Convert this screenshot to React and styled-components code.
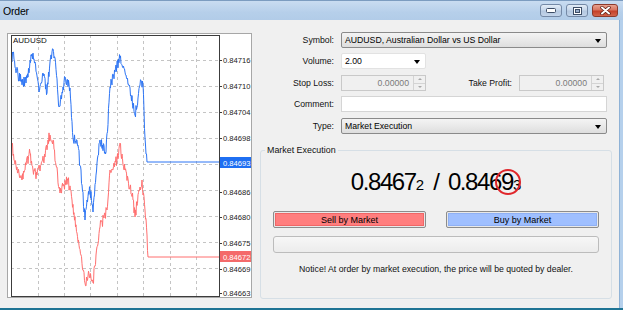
import React from 'react'
import styled, { createGlobalStyle } from 'styled-components'

const GlobalStyle = createGlobalStyle`
  html, body {
    margin: 0;
    padding: 0;
    background: #fff;
  }
  body {
    font-family: "Liberation Sans", Arial, sans-serif;
    color: #000;
  }
`

const Window = styled.div`
  width: 623px;
  height: 310px;
  display: flex;
  flex-direction: column;
  box-sizing: border-box;
  background: #b5d0ec;
  border-top: 1px solid #7c9cc0;
  border-bottom: 2px solid #1f7494;
  overflow: hidden;
`

const TitleBar = styled.div`
  height: 19px;
  display: flex;
  align-items: center;
  justify-content: space-between;
  padding-left: 3px;
  background: linear-gradient(#c9dcf1, #b6cfea 60%, #b2cce8);
`

const Title = styled.span`
  font-size: 10.5px;
  letter-spacing: -0.2px;
  margin-top: 1px;
`

const Controls = styled.div`
  display: flex;
  gap: 4px;
  margin-right: 5px;
  align-self: flex-start;
  margin-top: 3px;
`

const CtrlButton = styled.div`
  width: ${p => (p.$close ? 26 : 22)}px;
  height: 13px;
  box-sizing: border-box;
  border: 1px solid ${p => (p.$close ? '#8d3a2c' : '#7489a6')};
  border-radius: 3px;
  background: ${p =>
    p.$close
      ? 'linear-gradient(#e8a290, #d87561 45%, #c5402a 55%, #d2654c)'
      : 'linear-gradient(#e3ecf6, #c6d6ea 45%, #b4c8e0 55%, #c3d4ea)'};
  display: flex;
  align-items: center;
  justify-content: center;
`

const Body = styled.div`
  flex: 1;
  display: flex;
  background: #f0f0f0;
  margin-right: 3px;
  border-right: 1px solid #8fb2d6;
`

const ChartPanel = styled.div`
  width: 243px;
  height: 263px;
  margin: 13px 0 0 7px;
  background: #fff;
  border: 1px solid #a7a7a7;
  flex-shrink: 0;

  svg {
    display: block;
  }
`

const Form = styled.div`
  flex: 1;
  margin-left: 3px;
  padding-top: 12px;
  display: flex;
  flex-direction: column;
  font-size: 8.7px;
`

const Row = styled.div`
  display: flex;
  align-items: center;
  height: 16px;
  margin-top: ${p => p.$top || 0}px;
`

const Label = styled.span`
  width: ${p => p.$w || 86}px;
  box-sizing: border-box;
  padding-right: 7px;
  text-align: right;
  color: #111;
`

const Combo = styled.div`
  position: relative;
  width: ${p => p.$w}px;
  height: ${p => p.$h || 16}px;
  box-sizing: border-box;
  display: flex;
  align-items: center;
  padding-left: 3px;
  border: 1px solid ${p => (p.$plain ? '#e2e2e2' : '#8a8a8a')};
  border-radius: 2px;
  background: ${p => (p.$plain ? '#fff' : 'linear-gradient(#f4f4f4, #e9e9e9 50%, #dedede)')};
`

const Arrow = styled.span`
  position: absolute;
  right: 5px;
  top: 50%;
  margin-top: -1px;
  border-left: 3.5px solid transparent;
  border-right: 3.5px solid transparent;
  border-top: 4px solid #000;
`

const Spin = styled.div`
  position: relative;
  width: ${p => p.$w}px;
  height: 16px;
  box-sizing: border-box;
  border: 1px solid #c9c9c9;
  background: #f0f0f0;
  display: flex;
  align-items: stretch;
`

const SpinValue = styled.span`
  flex: 1;
  text-align: right;
  padding-right: 4px;
  color: #7a7a7a;
  line-height: 14px;
`

const SpinButtons = styled.div`
  width: 11px;
  display: flex;
  flex-direction: column;
  border-left: 1px solid #d4d4d4;
`

const SpinHalf = styled.div`
  flex: 1;
  display: flex;
  align-items: center;
  justify-content: center;
  border-top: ${p => (p.$down ? '1px solid #d4d4d4' : 'none')};

  &::after {
    content: '';
    border-left: 2px solid transparent;
    border-right: 2px solid transparent;
    ${p => (p.$down ? 'border-top: 2px solid #a8a8a8;' : 'border-bottom: 2px solid #a8a8a8;')}
  }
`

const TextBox = styled.div`
  width: ${p => p.$w}px;
  height: 16px;
  box-sizing: border-box;
  border: 1px solid #d5d5d5;
  background: #fff;
`

const Group = styled.fieldset`
  margin: 11px 7px 0 5px;
  height: 154px;
  box-sizing: border-box;
  padding: 0 12px;
  border: 1px solid #d6dfe6;
  border-radius: 3px;
  display: flex;
  flex-direction: column;
  min-width: 0;
`

const Legend = styled.legend`
  font-size: 8.9px;
  line-height: 10px;
  padding: 0 2px;
  margin-left: -8px;
  color: #111;
`

const Price = styled.div`
  margin-top: 13px;
  text-align: center;
  font-size: 24px;
  line-height: 28px;
  letter-spacing: -1.4px;
  word-spacing: 4px;
  color: #000;
  white-space: nowrap;
`

const Small = styled.span`
  font-size: 15px;
  letter-spacing: 0;
`

const Marked = styled.span`
  position: relative;

  &::after {
    content: '';
    position: absolute;
    left: 50%;
    top: 50%;
    width: 22px;
    height: 22px;
    margin: -13px 0 0 -12px;
    border: 2px solid #e0262b;
    border-radius: 50%;
  }
`

const Buttons = styled.div`
  margin-top: 12px;
  display: grid;
  grid-template-columns: 1fr 1fr;
  gap: 20px;
`

const TradeButton = styled.div`
  height: 17px;
  box-sizing: border-box;
  border: 1px solid #8c8c8c;
  border-radius: 2px;
  padding: 1px;
  background: #e8e8e8;

  span {
    display: flex;
    height: 100%;
    align-items: center;
    justify-content: center;
    font-size: 9px;
    background: ${p => (p.$sell ? '#ff7e7e' : '#9fbfff')};
    box-shadow: inset 0 0 0 1px ${p => (p.$sell ? '#f06666' : '#8fb0f4')};
  }
`

const Progress = styled.div`
  margin-top: 8px;
  height: 17px;
  box-sizing: border-box;
  border: 1px solid #bcbcbc;
  border-radius: 3px;
  background: linear-gradient(#f7f7f7, #ececec);
`

const Notice = styled.div`
  margin-top: 11px;
  text-align: center;
  font-size: 8.7px;
  line-height: 11px;
  color: #111;
`

const blueKeys = [
  [12, 62], [13, 53], [15, 67], [18, 75], [23, 83], [27, 78], [32, 54], [35, 62],
  [39, 92], [43, 73], [47, 93], [50, 62], [53, 49], [55, 58], [59, 107], [65, 77],
  [70, 88], [73, 138], [78, 145], [82, 185], [85, 220], [87, 200], [90, 189], [93, 212],
  [97, 163], [100, 140], [106, 152], [110, 87], [115, 72], [120, 58], [126, 75], [130, 88],
  [135, 115], [140, 85], [143, 85], [145, 138], [147, 162], [219, 162],
]

const redKeys = [
  [12, 145], [14, 160], [17, 167], [20, 178], [22, 180], [26, 165], [30, 153], [33, 170],
  [37, 175], [41, 165], [45, 157], [48, 140], [50, 135], [53, 140], [56, 165], [60, 193],
  [64, 185], [68, 180], [72, 200], [77, 233], [81, 255], [85, 283], [88, 276], [90, 277],
  [93, 283], [96, 255], [100, 227], [104, 218], [107, 210], [110, 170], [114, 163], [117, 160],
  [120, 143], [123, 165], [125, 170], [130, 187], [133, 200], [135, 217], [139, 190], [142, 180],
  [145, 210], [147, 235], [148, 257], [219, 257],
]

// jagged tick line through the key points, flat tail at the end
function tickPath(keys, seed, amp) {
  let s = seed
  const rnd = () => {
    s = (s * 16807) % 2147483647
    return s / 2147483647
  }
  let d = `M${keys[0][0]},${keys[0][1]}`
  for (let i = 0; i < keys.length - 2; i++) {
    const [x0, y0] = keys[i]
    const [x1, y1] = keys[i + 1]
    const steps = Math.max(1, Math.round((x1 - x0) / 0.5))
    for (let k = 1; k <= steps; k++) {
      const t = k / steps
      const x = x0 + (x1 - x0) * t
      const y = y0 + (y1 - y0) * t + (k < steps ? (rnd() - 0.5) * amp : 0)
      d += `L${x.toFixed(1)},${y.toFixed(1)}`
    }
  }
  const [xf, yf] = keys[keys.length - 1]
  return d + `L${xf},${yf}`
}

const gridY = [60, 86, 112, 138, 164, 190, 216, 242, 268]
const gridX = [38, 64, 90, 117, 143, 170, 196]
const scale = [
  ['0.84716', 60], ['0.84710', 86], ['0.84704', 112], ['0.84698', 138],
  ['0.84686', 192], ['0.84680', 217], ['0.84675', 243], ['0.84669', 269], ['0.84663', 293],
]

function Chart() {
  return (
    <svg width="243" height="263" viewBox="8 34 243 263" fontFamily="Liberation Sans, Arial, sans-serif">
      {gridY.map(y => (
        <line key={y} x1="11" x2="219" y1={y + 0.5} y2={y + 0.5} stroke="#c4c4c4" strokeDasharray="3 3" />
      ))}
      {gridX.map(x => (
        <line key={x} x1={x + 0.5} x2={x + 0.5} y1="35" y2="297" stroke="#c4c4c4" strokeDasharray="3 3" />
      ))}
      <path d={tickPath(redKeys, 97, 11)} fill="none" stroke="#ff6f6f" strokeWidth="1" />
      <path d={tickPath(blueKeys, 31, 11)} fill="none" stroke="#2c74f4" strokeWidth="1" />
      <rect x="11.5" y="35.5" width="208" height="261" fill="none" stroke="#3c3c3c" />
      <text x="13" y="43" fontSize="8" fill="#111">AUDUSD</text>
      {scale.map(([v, y]) => (
        <g key={v}>
          <line x1="219" x2="222" y1={y + 0.5} y2={y + 0.5} stroke="#3c3c3c" />
          <text x="223" y={y + 3} fontSize="7.6" fill="#222">{v}</text>
        </g>
      ))}
      <rect x="220" y="157" width="31" height="11" fill="#1f6ff2" />
      <text x="223" y="165.5" fontSize="7.6" fill="#fff">0.84693</text>
      <rect x="220" y="251" width="31" height="11" fill="#f46a6a" />
      <text x="223" y="259.5" fontSize="7.6" fill="#fff">0.84672</text>
    </svg>
  )
}

export default function App() {
  return (
    <>
      <GlobalStyle />
      <Window>
        <TitleBar>
          <Title>Order</Title>
          <Controls>
            <CtrlButton>
              <svg width="10" height="5" viewBox="0 0 10 5">
                <rect x="0.5" y="0.5" width="9" height="4" rx="1" fill="#fff" stroke="#3d4d66" />
              </svg>
            </CtrlButton>
            <CtrlButton>
              <svg width="9" height="8" viewBox="0 0 9 8">
                <rect x="0.5" y="0.5" width="8" height="7" fill="#fff" stroke="#3d4d66" />
                <rect x="2.5" y="2.5" width="4" height="3" fill="#9aaecb" stroke="#3d4d66" />
              </svg>
            </CtrlButton>
            <CtrlButton $close>
              <svg width="11" height="9" viewBox="0 0 11 9">
                <path d="M2 1.5 L9 7.5 M9 1.5 L2 7.5" stroke="#5a1a10" strokeWidth="3.4" strokeLinecap="round" />
                <path d="M2 1.5 L9 7.5 M9 1.5 L2 7.5" stroke="#fff" strokeWidth="2" strokeLinecap="round" />
              </svg>
            </CtrlButton>
          </Controls>
        </TitleBar>
        <Body>
          <ChartPanel>
            <Chart />
          </ChartPanel>
          <Form>
            <Row>
              <Label>Symbol:</Label>
              <Combo $w={266}>
                AUDUSD, Australian Dollar vs US Dollar
                <Arrow />
              </Combo>
            </Row>
            <Row $top={5}>
              <Label>Volume:</Label>
              <Combo $w={85} $plain>
                2.00
                <Arrow />
              </Combo>
            </Row>
            <Row $top={6}>
              <Label>Stop Loss:</Label>
              <Spin $w={85}>
                <SpinValue>0.00000</SpinValue>
                <SpinButtons>
                  <SpinHalf />
                  <SpinHalf $down />
                </SpinButtons>
              </Spin>
              <Label $w={93}>Take Profit:</Label>
              <Spin $w={85}>
                <SpinValue>0.00000</SpinValue>
                <SpinButtons>
                  <SpinHalf />
                  <SpinHalf $down />
                </SpinButtons>
              </Spin>
            </Row>
            <Row $top={5}>
              <Label>Comment:</Label>
              <TextBox $w={266} />
            </Row>
            <Row $top={6}>
              <Label>Type:</Label>
              <Combo $w={266}>
                Market Execution
                <Arrow />
              </Combo>
            </Row>
            <Group>
              <Legend>Market Execution</Legend>
              <Price>
                0.8467<Small>2</Small> / 0.846<Marked>9</Marked><Small>3</Small>
              </Price>
              <Buttons>
                <TradeButton $sell>
                  <span>Sell by Market</span>
                </TradeButton>
                <TradeButton>
                  <span>Buy by Market</span>
                </TradeButton>
              </Buttons>
              <Progress />
              <Notice>Notice! At order by market execution, the price will be quoted by dealer.</Notice>
            </Group>
          </Form>
        </Body>
      </Window>
    </>
  )
}
